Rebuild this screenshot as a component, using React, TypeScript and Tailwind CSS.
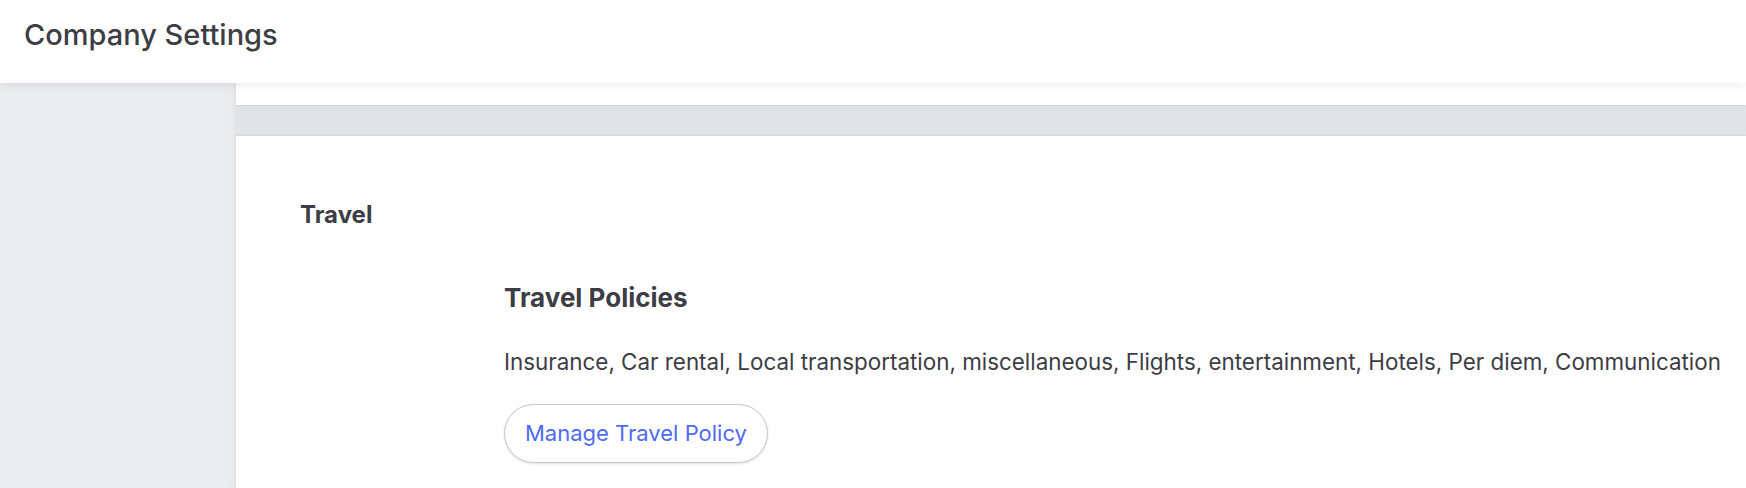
import React from "react";

const categories = [
  "Insurance",
  "Car rental",
  "Local transportation",
  "miscellaneous",
  "Flights",
  "entertainment",
  "Hotels",
  "Per diem",
  "Communication",
];

export default function App() {
  return (
    <div className="flex h-screen w-full flex-col overflow-hidden bg-[#e2e3e7] font-['Inter',sans-serif] text-[#3d3d45]">
      <header className="relative z-10 flex h-[83px] shrink-0 items-center bg-white px-[24px] pb-[13px] shadow-[0_2px_10px_rgba(0,0,0,0.08)]">
        <h1 className="text-[29px] font-medium">Company Settings</h1>
      </header>

      <div className="flex flex-1">
        <aside className="w-[236px] shrink-0 bg-[#ebecef] shadow-[inset_-6px_0_8px_-6px_rgba(0,0,0,0.06)]" />

        <main className="flex flex-1 flex-col">
          <div className="h-[22px] bg-white shadow-[0_1px_2px_rgba(0,0,0,0.08)]" />
          <div className="h-[31px]" />
          <section className="flex-1 bg-white pl-[64px] pt-[65px] shadow-[0_-1px_2px_rgba(0,0,0,0.06)]">
            <h2 className="text-[24px] font-bold leading-[28px]">Travel</h2>

            <div className="ml-[204px] mt-[53px]">
              <h3 className="text-[26px] font-bold leading-[32px]">Travel Policies</h3>
              <p className="mt-[34px] text-[22.4px] leading-[28px]">{categories.join(", ")}</p>
              <button
                type="button"
                className="mt-[28px] h-[59px] rounded-full border border-[#c5c5cd] bg-white px-[20px] text-[22px] text-[#4f6af5] shadow-[0_1px_3px_rgba(0,0,0,0.12)]"
              >
                Manage Travel Policy
              </button>
            </div>
          </section>
        </main>
      </div>
    </div>
  );
}
